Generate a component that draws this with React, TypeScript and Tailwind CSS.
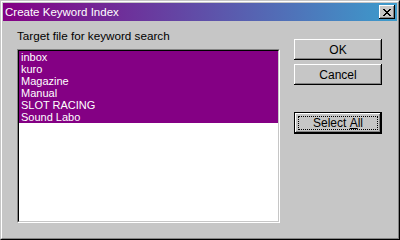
import React from "react";

const font = "font-['Liberation_Sans',Arial,sans-serif]";

function CloseGlyph() {
  return (
    <svg width="8" height="7" viewBox="0 0 8 7" shapeRendering="crispEdges">
      <path
        fill="#000"
        d="M0 0h2v1H0zM6 0h2v1H6zM1 1h2v1H1zM5 1h2v1H5zM2 2h4v1H2zM3 3h2v1H3zM2 4h4v1H2zM1 5h2v1H1zM5 5h2v1H5zM0 6h2v1H0zM6 6h2v1H6z"
      />
    </svg>
  );
}

function Button({ children, mt }: { children: React.ReactNode; mt: string }) {
  return (
    <div
      className={`${mt} w-[88px] h-[21px] flex items-center justify-center bg-[#c6c6c6] text-[12px] leading-[12px] text-black shadow-[inset_-1px_-1px_0_#000,inset_1px_1px_0_#fff,inset_-2px_-2px_0_#848484]`}
    >
      {children}
    </div>
  );
}

export default function App() {
  const items = ["inbox", "kuro", "Magazine", "Manual", "SLOT RACING", "Sound Labo"];
  return (
    <div className={`${font} w-[400px] h-[240px] flex flex-col bg-[#c6c6c6] border border-t-[#c6c6c6] border-l-[#c6c6c6] border-r-black border-b-black`}>
      <div className="flex-1 flex flex-col border border-t-white border-l-white border-r-[#848484] border-b-[#848484] p-[1px]">
        <div className="h-[18px] flex items-center justify-between pl-[2px] pr-[2px] bg-linear-to-r/srgb from-[#840084] to-[#3c9ccc]">
          <span className="text-[11.5px] leading-[12px] text-white">Create Keyword Index</span>
          <div className="w-[16px] h-[14px] flex items-center justify-center bg-[#c6c6c6] shadow-[inset_-1px_-1px_0_#000,inset_1px_1px_0_#fff,inset_-2px_-2px_0_#848484]">
            <div className="mr-[1px]">
              <CloseGlyph />
            </div>
          </div>
        </div>
        <div className="flex-1 flex flex-row pl-[14px]">
          <div className="w-[263px] flex flex-col">
            <div className="mt-[9px] h-[12px] text-[11.7px] leading-[12px] text-black whitespace-nowrap">
              Target file for keyword search
            </div>
            <div className="mt-[7px] h-[174px] border border-t-[#848484] border-l-[#848484] border-r-white border-b-white">
              <div className="h-full border border-t-black border-l-black border-r-[#c6c6c6] border-b-[#c6c6c6] bg-white">
                {items.map((it) => (
                  <div
                    key={it}
                    className="h-[12px] leading-[12px] text-[11px] pl-[2px] bg-[#840084] text-white whitespace-nowrap"
                  >
                    {it}
                  </div>
                ))}
              </div>
            </div>
          </div>
          <div className="ml-[14px] flex flex-col pt-[18px]">
            <Button mt="mt-0">OK</Button>
            <Button mt="mt-[4px]">Cancel</Button>
            <div className="mt-[27px] w-[88px] h-[22px] border border-black">
              <div className="w-full h-full p-[3px] bg-[#c6c6c6] shadow-[inset_-1px_-1px_0_#000,inset_1px_1px_0_#fff,inset_-2px_-2px_0_#848484]">
                <div className="w-full h-full border border-dotted border-black flex items-center justify-center text-[12px] leading-[12px] text-black whitespace-pre">
                  {"Select "}<span className="underline">A</span>ll
                </div>
              </div>
            </div>
          </div>
        </div>
      </div>
    </div>
  );
}
